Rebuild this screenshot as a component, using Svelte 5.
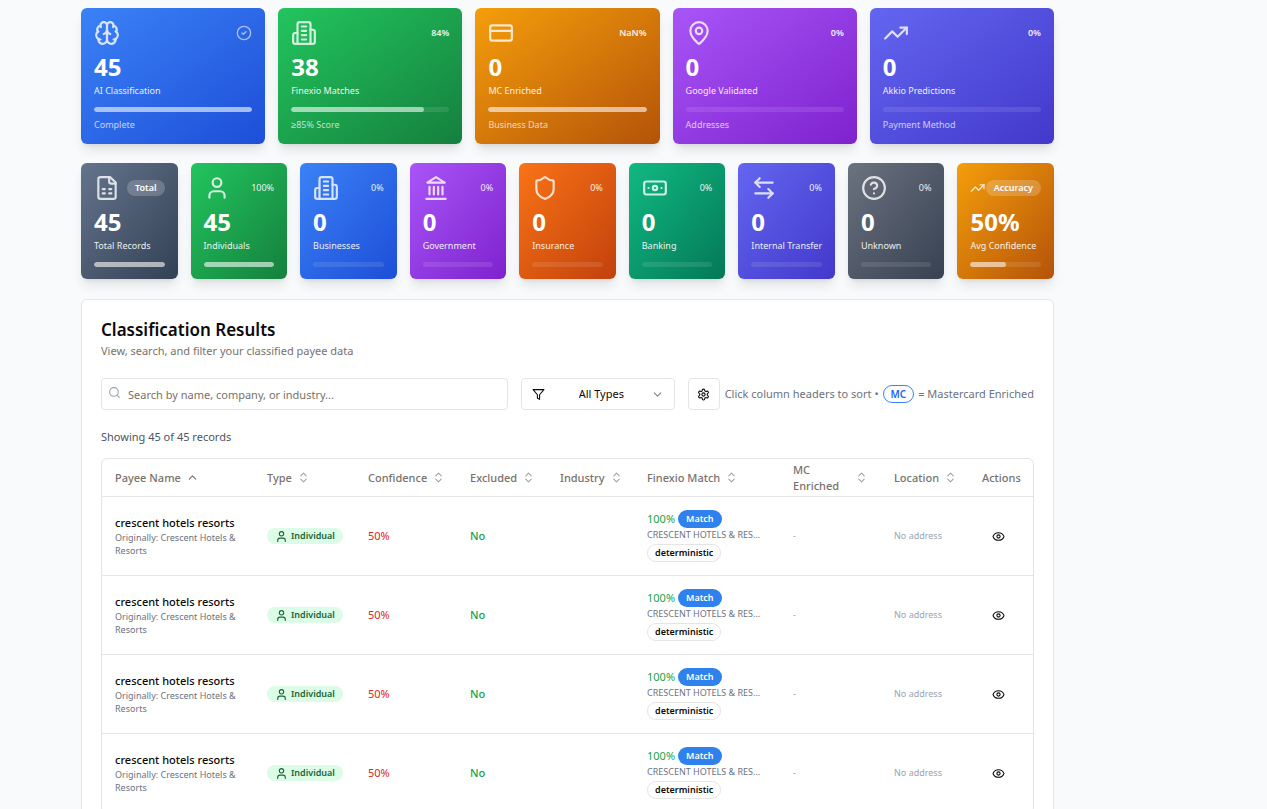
<script>
  const icons = {
    brain: '<path d="M12 5a3 3 0 1 0-5.997.125 4 4 0 0 0-2.526 5.77 4 4 0 0 0 .556 6.588A4 4 0 1 0 12 18Z"/><path d="M12 5a3 3 0 1 1 5.997.125 4 4 0 0 1 2.526 5.77 4 4 0 0 1-.556 6.588A4 4 0 1 1 12 18Z"/><path d="M15 13a4.5 4.5 0 0 1-3-4 4.5 4.5 0 0 1-3 4"/><path d="M17.599 6.5a3 3 0 0 0 .399-1.375"/><path d="M6.003 5.125A3 3 0 0 0 6.401 6.5"/><path d="M3.477 10.896a4 4 0 0 1 .585-.396"/><path d="M19.938 10.5a4 4 0 0 1 .585.396"/><path d="M6 18a4 4 0 0 1-1.967-.516"/><path d="M19.967 17.484A4 4 0 0 1 18 18"/>',
    building: '<path d="M6 22V4a2 2 0 0 1 2-2h8a2 2 0 0 1 2 2v18Z"/><path d="M6 12H4a2 2 0 0 0-2 2v6a2 2 0 0 0 2 2h2"/><path d="M18 9h2a2 2 0 0 1 2 2v9a2 2 0 0 1-2 2h-2"/><path d="M10 6h4M10 10h4M10 14h4M10 18h4"/>',
    card: '<rect width="20" height="14" x="2" y="5" rx="2"/><path d="M2 10h20"/>',
    pin: '<path d="M20 10c0 4.993-5.539 10.193-7.399 11.799a1 1 0 0 1-1.202 0C9.539 20.193 4 14.993 4 10a8 8 0 0 1 16 0"/><circle cx="12" cy="10" r="3"/>',
    trend: '<path d="M22 7l-8.5 8.5-5-5L2 17"/><path d="M16 7h6v6"/>',
    sheet: '<path d="M15 2H6a2 2 0 0 0-2 2v16a2 2 0 0 0 2 2h12a2 2 0 0 0 2-2V7Z"/><path d="M14 2v4a2 2 0 0 0 2 2h4"/><path d="M8 13h2M14 13h2M8 17h2M14 17h2"/>',
    user: '<path d="M19 21v-2a4 4 0 0 0-4-4H9a4 4 0 0 0-4 4v2"/><circle cx="12" cy="7" r="4"/>',
    landmark: '<path d="M3 22h18M6 18v-7M10 18v-7M14 18v-7M18 18v-7"/><path d="M12 2l8 5H4Z"/>',
    shield: '<path d="M20 13c0 5-3.5 7.5-7.66 8.95a1 1 0 0 1-.67-.01C7.5 20.5 4 18 4 13V6a1 1 0 0 1 1-1c2 0 4.5-1.2 6.24-2.72a1.17 1.17 0 0 1 1.52 0C14.51 3.81 17 5 19 5a1 1 0 0 1 1 1z"/>',
    banknote: '<rect width="20" height="12" x="2" y="6" rx="2"/><circle cx="12" cy="12" r="2"/><path d="M6 12h.01M18 12h.01"/>',
    transfer: '<path d="M8 3 4 7l4 4"/><path d="M4 7h16"/><path d="m16 21 4-4-4-4"/><path d="M20 17H4"/>',
    help: '<circle cx="12" cy="12" r="10"/><path d="M9.09 9a3 3 0 0 1 5.83 1c0 2-3 3-3 3"/><path d="M12 17h.01"/>',
    check: '<circle cx="12" cy="12" r="10"/><path d="m9 12 2 2 4-4"/>',
    search: '<circle cx="11" cy="11" r="8"/><path d="m21 21-4.3-4.3"/>',
    filter: '<path d="M22 3H2l8 9.46V19l4 2v-8.54Z"/>',
    gear: '<path d="M12.22 2h-.44a2 2 0 0 0-2 2v.18a2 2 0 0 1-1 1.73l-.43.25a2 2 0 0 1-2 0l-.15-.08a2 2 0 0 0-2.73.73l-.22.38a2 2 0 0 0 .73 2.73l.15.1a2 2 0 0 1 1 1.72v.51a2 2 0 0 1-1 1.74l-.15.09a2 2 0 0 0-.73 2.73l.22.38a2 2 0 0 0 2.73.73l.15-.08a2 2 0 0 1 2 0l.43.25a2 2 0 0 1 1 1.73V20a2 2 0 0 0 2 2h.44a2 2 0 0 0 2-2v-.18a2 2 0 0 1 1-1.73l.43-.25a2 2 0 0 1 2 0l.15.08a2 2 0 0 0 2.73-.73l.22-.39a2 2 0 0 0-.73-2.73l-.15-.08a2 2 0 0 1-1-1.74v-.5a2 2 0 0 1 1-1.74l.15-.09a2 2 0 0 0 .73-2.73l-.22-.38a2 2 0 0 0-2.73-.73l-.15.08a2 2 0 0 1-2 0l-.43-.25a2 2 0 0 1-1-1.73V4a2 2 0 0 0-2-2z"/><circle cx="12" cy="12" r="3"/>',
    down: '<path d="m6 9 6 6 6-6"/>',
    up: '<path d="m18 15-6-6-6 6"/>',
    sort: '<path d="m7 15 5 5 5-5"/><path d="m7 9 5-5 5 5"/>',
    eye: '<path d="M2.062 12.348a1 1 0 0 1 0-.696 10.75 10.75 0 0 1 19.876 0 1 1 0 0 1 0 .696 10.75 10.75 0 0 1-19.876 0"/><circle cx="12" cy="12" r="3"/>'
  };

  const stages = [
    { icon: 'brain', tone: 'blue', done: true, value: '45', label: 'AI Classification', fill: 100, note: 'Complete' },
    { icon: 'building', tone: 'green', tag: '84%', value: '38', label: 'Finexio Matches', fill: 84, note: '≥85% Score' },
    { icon: 'card', tone: 'amber', tag: 'NaN%', value: '0', label: 'MC Enriched', fill: 100, note: 'Business Data' },
    { icon: 'pin', tone: 'purple', tag: '0%', value: '0', label: 'Google Validated', fill: 0, note: 'Addresses' },
    { icon: 'trend', tone: 'indigo', tag: '0%', value: '0', label: 'Akkio Predictions', fill: 0, note: 'Payment Method' }
  ];

  const types = [
    { icon: 'sheet', tone: 'slate', pill: 'Total', value: '45', label: 'Total Records', fill: 100 },
    { icon: 'user', tone: 'green', tag: '100%', value: '45', label: 'Individuals', fill: 100 },
    { icon: 'building', tone: 'blue', tag: '0%', value: '0', label: 'Businesses', fill: 0 },
    { icon: 'landmark', tone: 'purple', tag: '0%', value: '0', label: 'Government', fill: 0 },
    { icon: 'shield', tone: 'orange', tag: '0%', value: '0', label: 'Insurance', fill: 0 },
    { icon: 'banknote', tone: 'emerald', tag: '0%', value: '0', label: 'Banking', fill: 0 },
    { icon: 'transfer', tone: 'indigo', tag: '0%', value: '0', label: 'Internal Transfer', fill: 0 },
    { icon: 'help', tone: 'gray', tag: '0%', value: '0', label: 'Unknown', fill: 0 },
    { icon: 'trend', tone: 'amber', pill: 'Accuracy', value: '50%', label: 'Avg Confidence', fill: 50 }
  ];

  const columns = [
    { name: 'Payee Name', width: 152, sort: 'up' },
    { name: 'Type', width: 101, sort: 'sort' },
    { name: 'Confidence', width: 102, sort: 'sort' },
    { name: 'Excluded', width: 90, sort: 'sort' },
    { name: 'Industry', width: 87, sort: 'sort' },
    { name: 'Finexio Match', width: 146, sort: 'sort' },
    { name: 'MC Enriched', width: 101, sort: 'sort' },
    { name: 'Location', width: 88, sort: 'sort' },
    { name: 'Actions', width: 64 }
  ];
  const total = columns.reduce((sum, c) => sum + c.width, 0);

  const rows = Array.from({ length: 4 }, (_, id) => ({
    id,
    name: 'crescent hotels resorts',
    original: 'Crescent Hotels & Resorts',
    match: 'CRESCENT HOTELS & RES...'
  }));
</script>

{#snippet icon(name, cls)}
  <svg class="icon {cls}" viewBox="0 0 24 24" aria-hidden="true">{@html icons[name]}</svg>
{/snippet}

{#snippet stat(s, strong)}
  <article class="stat {s.tone}">
    <div class="top">
      {@render icon(s.icon, 'large')}
      {#if s.done}{@render icon('check', 'medium')}{/if}
      {#if s.tag}<span class="tag" class:strong>{s.tag}</span>{/if}
      {#if s.pill}<span class="pill">{s.pill}</span>{/if}
    </div>
    <div class="value">{s.value}</div>
    <div class="label">{s.label}</div>
    <div class="bar"><div class="fill" style="width: {s.fill}%"></div></div>
    {#if s.note}<div class="note">{s.note}</div>{/if}
  </article>
{/snippet}

<main>
  <section class="grid stages">
    {#each stages as s}{@render stat(s, true)}{/each}
  </section>
  <section class="grid types">
    {#each types as s}{@render stat(s, false)}{/each}
  </section>

  <section class="results">
    <h2>Classification Results</h2>
    <p class="desc">View, search, and filter your classified payee data</p>

    <div class="tools">
      <div class="search">
        {@render icon('search', 'glass')}
        <input type="text" aria-label="Search records" placeholder="Search by name, company, or industry..." />
      </div>
      <div class="select">
        {@render icon('filter', 'funnel')}
        <select aria-label="Payee type">
          <option>All Types</option>
          <option>Individual</option>
          <option>Business</option>
          <option>Government</option>
        </select>
        {@render icon('down', 'chevron')}
      </div>
      <button class="settings" aria-label="Table settings">{@render icon('gear', 'small')}</button>
      <div class="hint">
        <span>Click column headers to sort •</span>
        <span class="badge mc">MC</span>
        <span>= Mastercard Enriched</span>
      </div>
    </div>

    <p class="count">Showing 45 of 45 records</p>

    <div class="frame">
      <table>
        <colgroup>
          {#each columns as c}<col style="width: {(c.width / total) * 100}%" />{/each}
        </colgroup>
        <thead>
          <tr>
            {#each columns as c}
              <th scope="col">
                {#if c.sort}
                  <button class="head">{c.name}{@render icon(c.sort, c.sort === 'up' ? 'small' : 'small faint')}</button>
                {:else}
                  {c.name}
                {/if}
              </th>
            {/each}
          </tr>
        </thead>
        <tbody>
          {#each rows as r (r.id)}
            <tr>
              <td>
                <div class="name">{r.name}</div>
                <div class="sub">Originally: {r.original}</div>
              </td>
              <td><span class="badge type">{@render icon('user', 'small')}Individual</span></td>
              <td class="low">50%</td>
              <td class="no">No</td>
              <td></td>
              <td>
                <div class="score"><span>100%</span><span class="badge match">Match</span></div>
                <div class="sub line">{r.match}</div>
                <span class="badge outline">deterministic</span>
              </td>
              <td class="muted">-</td>
              <td class="muted">No address</td>
              <td><button class="view" aria-label="View {r.name}">{@render icon('eye', 'small')}</button></td>
            </tr>
          {/each}
        </tbody>
      </table>
    </div>
  </section>
</main>

<style>
  :global(html) {
    scrollbar-width: none;
  }
  :global(body) {
    margin: 0;
    background: #f9fafb;
  }
  main {
    box-sizing: border-box;
    padding: 8px 213px 20px 81px;
    font-family: "Noto Sans", sans-serif;
    font-size: 11px;
    line-height: 16px;
    color: #0c0a09;
  }
  h2, p {
    margin: 0;
  }
  button, input, select {
    font: inherit;
    color: inherit;
  }
  .icon {
    fill: none;
    stroke: currentColor;
    stroke-width: 2;
    stroke-linecap: round;
    stroke-linejoin: round;
    flex-shrink: 0;
    width: 13px;
    height: 13px;
  }
  .grid {
    display: grid;
    gap: 13px;
  }
  .stages {
    grid-template-columns: repeat(5, minmax(0, 1fr));
    margin-bottom: 19px;
  }
  .types {
    grid-template-columns: repeat(9, minmax(0, 1fr));
    margin-bottom: 20px;
  }
  .stat {
    padding: 12px 13px;
    border-radius: 6px;
    color: #fff;
    box-shadow: 0 8px 12px -2px rgb(0 0 0 / 0.1), 0 3px 5px -3px rgb(0 0 0 / 0.1);
  }
  .blue { background: linear-gradient(to bottom right, #3b82f6, #1d4ed8); }
  .green { background: linear-gradient(to bottom right, #22c55e, #15803d); }
  .amber { background: linear-gradient(to bottom right, #f59e0b, #b45309); }
  .purple { background: linear-gradient(to bottom right, #a855f7, #7e22ce); }
  .indigo { background: linear-gradient(to bottom right, #6366f1, #4338ca); }
  .slate { background: linear-gradient(to bottom right, #64748b, #334155); }
  .orange { background: linear-gradient(to bottom right, #f97316, #c2410c); }
  .emerald { background: linear-gradient(to bottom right, #10b981, #047857); }
  .gray { background: linear-gradient(to bottom right, #6b7280, #374151); }
  .top {
    display: flex;
    align-items: center;
    justify-content: space-between;
    height: 26px;
    margin-bottom: 6px;
    font-size: 9px;
  }
  .large {
    width: 26px;
    height: 26px;
    flex-shrink: 1;
    opacity: 0.8;
  }
  .medium {
    width: 16px;
    height: 16px;
    opacity: 0.6;
  }
  .tag {
    opacity: 0.9;
  }
  .strong {
    font-weight: 600;
  }
  .pill {
    padding: 0 8px;
    border-radius: 8px;
    background: rgb(255 255 255 / 0.2);
    font-weight: 600;
  }
  .value {
    font-size: 24px;
    line-height: 30px;
    font-weight: 700;
  }
  .label {
    font-size: 9px;
    line-height: 18px;
    white-space: nowrap;
    opacity: 0.9;
  }
  .bar {
    height: 5px;
    margin-top: 7px;
    border-radius: 3px;
    background: rgb(255 255 255 / 0.1);
    overflow: hidden;
  }
  .fill {
    height: 100%;
    border-radius: 3px;
    background: rgb(255 255 255 / 0.55);
  }
  .note {
    margin-top: 6px;
    font-size: 9px;
    line-height: 14px;
    opacity: 0.7;
  }
  .results {
    padding: 19px;
    border: 1px solid #e5e7eb;
    border-radius: 6px;
    background: #fff;
    box-shadow: 0 1px 2px rgb(0 0 0 / 0.05);
  }
  h2 {
    font-size: 17px;
    line-height: 22px;
    font-weight: 600;
  }
  .desc {
    margin-top: 2px;
    color: #78716c;
  }
  .tools {
    display: flex;
    align-items: center;
    gap: 13px;
    margin-top: 19px;
  }
  .search, .select {
    position: relative;
  }
  .search {
    flex: 1;
  }
  .search input, select {
    box-sizing: border-box;
    width: 100%;
    height: 32px;
    display: block;
    border: 1px solid #e5e5e5;
    border-radius: 4px;
    background: #fff;
  }
  .search input {
    padding: 0 10px 0 26px;
  }
  .search input::placeholder {
    color: #78716c;
    opacity: 1;
  }
  .glass {
    position: absolute;
    left: 7px;
    top: 8px;
    color: #9ca3af;
  }
  .select {
    width: 154px;
  }
  select {
    appearance: none;
    padding: 0 32px 0 57px;
  }
  .funnel, .chevron {
    position: absolute;
    top: 10px;
    pointer-events: none;
  }
  .funnel {
    left: 11px;
  }
  .chevron {
    right: 11px;
    opacity: 0.5;
  }
  .settings {
    display: flex;
    align-items: center;
    justify-content: center;
    width: 32px;
    height: 32px;
    padding: 0;
    border: 1px solid #e5e5e5;
    border-radius: 4px;
    background: #fff;
  }
  .hint {
    display: flex;
    align-items: center;
    gap: 4px;
    margin-left: -8px;
    color: #6b7280;
    white-space: nowrap;
  }
  .badge {
    display: inline-flex;
    align-items: center;
    box-sizing: border-box;
    height: 18px;
    padding: 0 7px;
    border: 1px solid transparent;
    border-radius: 9px;
    font-size: 9px;
    font-weight: 600;
    vertical-align: top;
  }
  .mc {
    border-color: #3b82f6;
    color: #2563eb;
    font-size: 10px;
  }
  .count {
    margin: 19px 0 13px;
    color: #4b5563;
  }
  .frame {
    border: 1px solid #e5e5e5;
    border-radius: 6px;
  }
  table {
    width: 100%;
    table-layout: fixed;
    border-collapse: collapse;
  }
  th {
    height: 37px;
    padding: 0 13px;
    text-align: left;
    font-weight: 500;
    color: #78716c;
  }
  tr {
    border-bottom: 1px solid #e5e5e5;
  }
  .head {
    display: inline-flex;
    align-items: center;
    gap: 5px;
    padding: 0;
    border: 0;
    background: none;
    text-align: left;
  }
  .faint {
    color: #9ca3af;
  }
  td {
    height: 79px;
    box-sizing: border-box;
    padding: 0 13px;
  }
  .name {
    font-weight: 500;
  }
  .sub {
    font-size: 9px;
    line-height: 13px;
    color: #6b7280;
  }
  .line {
    white-space: nowrap;
    margin-bottom: 3px;
  }
  .type {
    height: 16px;
    gap: 3px;
    background: #dcfce7;
    color: #166534;
  }
  .low {
    color: #dc2626;
  }
  .no, .score {
    color: #16a34a;
  }
  .no {
    font-weight: 500;
  }
  .score {
    display: flex;
    align-items: center;
    gap: 3px;
  }
  .match {
    background: #2f81ed;
    color: #fff;
  }
  .outline {
    border-color: #e5e5e5;
  }
  .muted {
    font-size: 9px;
    color: #9ca3af;
  }
  .view {
    display: flex;
    align-items: center;
    justify-content: center;
    width: 32px;
    height: 28px;
    padding: 0;
    border: 0;
    background: none;
  }
</style>
